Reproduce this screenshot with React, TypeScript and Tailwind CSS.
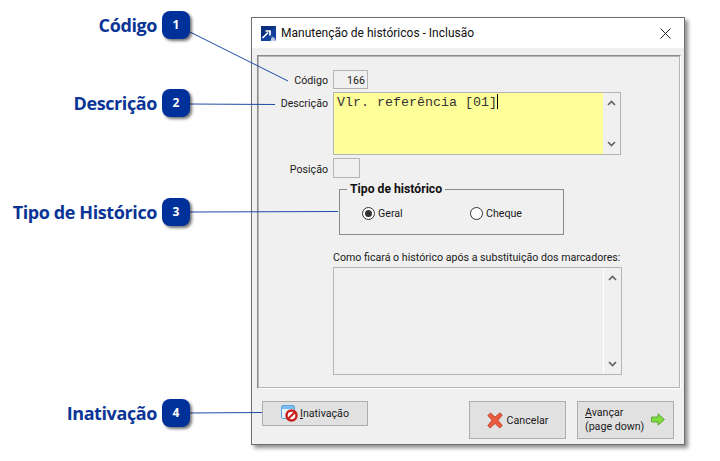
import React from "react";

const ui = "font-['Roboto','Noto_Sans',sans-serif]";

function Callout({ top, label, n }: { top: string; label: string; n: number }) {
  return (
    <div className={`absolute left-0 w-[190px] flex items-center justify-end gap-[5px] ${top}`}>
      <span className="font-['Open_Sans',sans-serif] font-bold text-[18px] leading-[28px] text-[#0a3596] whitespace-nowrap tracking-[-0.4px]">{label}</span>
      <span className="w-[28px] h-[28px] shrink-0 rounded-[8px] bg-[#00309a] text-white font-['Open_Sans',sans-serif] font-bold text-[12px] flex items-center justify-center shadow-[2px_2px_3px_rgba(0,0,0,0.55)]">{n}</span>
    </div>
  );
}

function Chevron({ up }: { up?: boolean }) {
  return (
    <svg width="9" height="6" viewBox="0 0 9 6" fill="none" stroke="#606060" strokeWidth="1.6">
      <path d={up ? "M1 5 L4.5 1.5 L8 5" : "M1 1 L4.5 4.5 L8 1"} />
    </svg>
  );
}

function ScrollBar() {
  return (
    <div className="w-[17px] shrink-0 bg-[#f0f0f0] flex flex-col items-center justify-between py-[7px]">
      <Chevron up />
      <Chevron />
    </div>
  );
}

function Radio({ checked }: { checked?: boolean }) {
  return (
    <span className="w-[13px] h-[13px] rounded-full border border-[#333] bg-white flex items-center justify-center shrink-0">
      {checked && <span className="w-[7px] h-[7px] rounded-full bg-[#333]" />}
    </span>
  );
}

export default function App() {
  return (
    <div className={`relative w-[720px] h-[461px] bg-white overflow-hidden pt-[17px] pl-[251px] ${ui}`}>
      {/* Dialog window */}
      <div className="w-[434px] h-[428px] bg-[#f0f0f0] border border-[#707070] shadow-[3px_3px_4px_rgba(0,0,0,0.45)] flex flex-col text-[10.65px] text-[#1a1a1a]">
        <div className="h-[30px] bg-white flex items-center pl-[9px] pr-[13px] shrink-0">
          <svg width="15" height="15" viewBox="0 0 15 15" className="mr-[5px] shrink-0">
            <rect width="15" height="15" fill="#12409a" />
            <path d="M0 0h15L0 12z" fill="#0a2f7e" />
            <path d="M1.500 12 L7 6.500 M4.500 5h4.500V9.500" stroke="#fff" strokeWidth="1.7" fill="none" />
            <path d="M9.500 15l1.500-5 1 2 1-1 2 4z" fill="#b9cbe6" />
          </svg>
          <span className="text-[12px] text-[#111] whitespace-nowrap flex-1">Manutenção de históricos - Inclusão</span>
          <svg width="11" height="11" viewBox="0 0 11 11" stroke="#222" strokeWidth="1" fill="none">
            <path d="M0.5 0.5 L10.5 10.5 M10.5 0.5 L0.5 10.5" />
          </svg>
        </div>

        {/* Panel */}
        <div className="ml-[5px] mt-[7px] w-[424px] h-[334px] shrink-0 border border-[#8a8a8a] border-r-white border-b-white outline outline-1 outline-offset-[-2px] outline-[#b5b5b5] pt-[14px] flex flex-col">
          <div className="flex items-center h-[19px]">
            <span className="w-[70px] text-right whitespace-nowrap pt-[3px]">Código</span>
            <div className="ml-[5px] w-[35px] h-[19px] border border-[#b4b4b4] text-right pr-[2px] leading-[19px]">166</div>
          </div>
          <div className="flex mt-[3px]">
            <span className="w-[70px] text-right whitespace-nowrap pt-[4px]">Descrição</span>
            <div className="ml-[5px] w-[288px] h-[63px] border border-[#b4b4b4] flex">
              <div className="flex-1 bg-[#ffff99] font-['Liberation_Mono',monospace] text-[13.33px] text-[#333] pl-[3px] pt-[1px] leading-[18px] whitespace-nowrap">
                Vlr. referência [01]<span className="inline-block w-px h-[15px] bg-black align-[-3px]" />
              </div>
              <ScrollBar />
            </div>
          </div>
          <div className="flex items-center mt-[3px]">
            <span className="w-[70px] text-right whitespace-nowrap pt-[4px]">Posição</span>
            <div className="ml-[5px] w-[27px] h-[20px] border border-[#b4b4b4]" />
          </div>

          {/* Group box */}
          <fieldset className="ml-[81px] mt-[5px] w-[225px] h-[52px] border border-[#8a8a8a] pl-[22px]">
            <legend className="ml-[-15px] px-[3px] font-bold text-[12.2px] leading-[13px] text-[#111]">Tipo de histórico</legend>
            <div className="flex items-center mt-[9px]">
              <div className="flex items-center gap-[3px] w-[108px]">
                <Radio checked />
                <span className="pt-[1px]">Geral</span>
              </div>
              <div className="flex items-center gap-[3px]">
                <Radio />
                <span className="pt-[1px]">Cheque</span>
              </div>
            </div>
          </fieldset>

          <span className="ml-[75px] mt-[15px] leading-[15px] whitespace-nowrap">Como ficará o histórico após a substituição dos marcadores:</span>
          <div className="ml-[75px] mt-[2px] w-[289px] h-[108px] border border-[#b4b4b4] flex">
            <div className="flex-1 bg-[#f0f0f0]" />
            <div className="border-l border-white flex">
              <ScrollBar />
            </div>
          </div>
        </div>

        {/* Buttons */}
        <div className="flex items-start pl-[10px] mt-[12px]">
          <button className="w-[106px] h-[25px] bg-[#e1e1e1] border border-[#adadad] flex items-center justify-center gap-[2px]">
            <svg width="17" height="17" viewBox="0 0 17 17">
              <rect x="0.5" y="0.5" width="13" height="13" rx="1.5" fill="#e8f2fc" stroke="#5ba3e0" />
              <rect x="1" y="1" width="12" height="3" fill="#7dbcf0" />
              <circle cx="10.500" cy="10.500" r="5" fill="#fff" stroke="#c8211c" strokeWidth="2.400" />
              <path d="M7 14 L14 7" stroke="#c8211c" strokeWidth="2.200" />
            </svg>
            <span><span className="underline">I</span>nativação</span>
          </button>
          <button className="ml-[101px] w-[97px] h-[38px] bg-[#e1e1e1] border border-[#adadad] flex items-center justify-center gap-[4px]">
            <svg width="16" height="17" viewBox="0 0 16 17">
              <path d="M0.800 3.500 L3.500 1 L8 5 L13 0.800 L15.300 3 L11 8.300 L15.300 13.500 L12.800 16 L8 11.500 L3 16 L0.800 13.500 L5 8.300 Z" fill="#ea5a3c" stroke="#b8402a" strokeWidth="0.800" strokeLinejoin="round" />
            </svg>
            <span className="pt-[1px]">Cancelar</span>
          </button>
          <button className="ml-[11px] w-[97px] h-[38px] bg-[#e1e1e1] border border-[#adadad] flex items-center pl-[7px] text-left leading-[14px]">
            <span className="whitespace-nowrap w-[61px]">
              <span className="underline">A</span>vançar
              <br />
              (page down)
            </span>
            <svg width="14" height="13" viewBox="0 0 14 13" className="ml-[5px] -mt-[1px]">
              <path d="M0.500 4 H7 V0.800 L13.500 6.500 L7 12.200 V9 H0.500 Z" fill="#7fdc3c" stroke="#4c9a2a" strokeWidth="0.800" />
            </svg>
          </button>
        </div>
      </div>

      {/* Annotation overlay */}
      <svg width="720" height="461" className="absolute left-0 top-0 pointer-events-none" stroke="#1f4aa5" strokeWidth="1" fill="none">
        <path d="M190 32 L288 81" />
        <path d="M190 104 L275 104.500" />
        <path d="M190 212 L338 211.500" />
        <path d="M190 413 L262 412.500" />
      </svg>
      <Callout top="top-[11px]" label="Código" n={1} />
      <Callout top="top-[89px]" label="Descrição" n={2} />
      <Callout top="top-[198px]" label="Tipo de Histórico" n={3} />
      <Callout top="top-[399px]" label="Inativação" n={4} />
    </div>
  );
}
